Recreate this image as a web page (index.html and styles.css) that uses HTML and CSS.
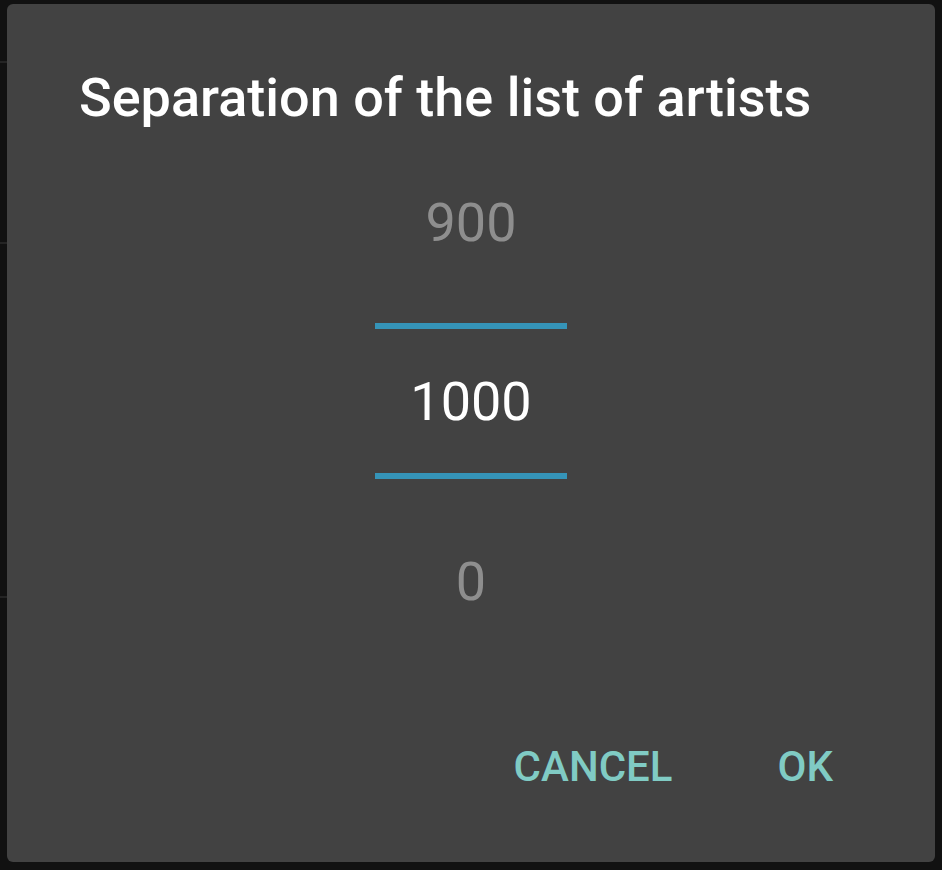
FILE: index.html
```html
<!DOCTYPE html>
<html>
<head>
<meta charset="utf-8">
<link rel="stylesheet" href="styles.css">
</head>
<body>
<div class="screen">
  <div class="bg-list">
    <div class="bg-row r1"></div>
    <div class="bg-row r2"></div>
    <div class="bg-row r3"></div>
  </div>
  <div class="dialog">
    <h1 class="title">Separation of the list of artists</h1>
    <div class="picker">
      <div class="num dim n-top">900</div>
      <div class="divider d1"></div>
      <div class="num sel">1000</div>
      <div class="divider d2"></div>
      <div class="num dim n-bot">0</div>
    </div>
    <div class="actions">
      <button class="btn">CANCEL</button>
      <button class="btn">OK</button>
    </div>
  </div>
</div>
</body>
</html>
```
FILE: styles.css
```css
html, body {
  margin: 0;
  padding: 0;
  background: #111111;
}
body {
  width: 942px;
  height: 870px;
  overflow: hidden;
  font-family: Roboto, "Noto Sans", sans-serif;
}
.screen {
  position: relative;
  width: 942px;
  height: 870px;
}
.bg-list {
  display: flex;
  flex-direction: column;
  width: 400px;
}
.bg-row {
  border-bottom: 2px solid #242424;
}
.r1 { height: 61px; }
.r2 { height: 179px; }
.r3 { height: 352px; }

.dialog {
  position: absolute;
  left: 7px;
  top: 4px;
  width: 928px;
  height: 858px;
  background: #424242;
  border-radius: 6px;
  display: flex;
  flex-direction: column;
  box-sizing: border-box;
}
.title {
  margin: 0;
  padding: 64px 0 0 72px;
  font-size: 54px;
  line-height: 60px;
  font-weight: 500;
  color: #ffffff;
}
.picker {
  display: flex;
  flex-direction: column;
  align-items: center;
  margin-top: 63px;
}
.num {
  font-size: 54px;
  line-height: 64px;
  height: 64px;
  font-weight: 400;
}
.dim { color: #8e8e8e; }
.sel { color: #ffffff; margin-top: 41px; }
.n-bot { margin-top: 71px; }
.divider {
  width: 192px;
  height: 6px;
  background: #3594b8;
}
.d1 { margin-top: 68px; }
.d2 { margin-top: 39px; }

.actions {
  display: flex;
  justify-content: flex-end;
  gap: 105px;
  margin-top: 129px;
  padding-right: 102px;
}
.btn {
  background: none;
  border: none;
  padding: 0;
  font-family: Roboto, "Noto Sans", sans-serif;
  font-size: 42px;
  line-height: 48px;
  font-weight: 500;
  color: #80cbc4;
}
```
